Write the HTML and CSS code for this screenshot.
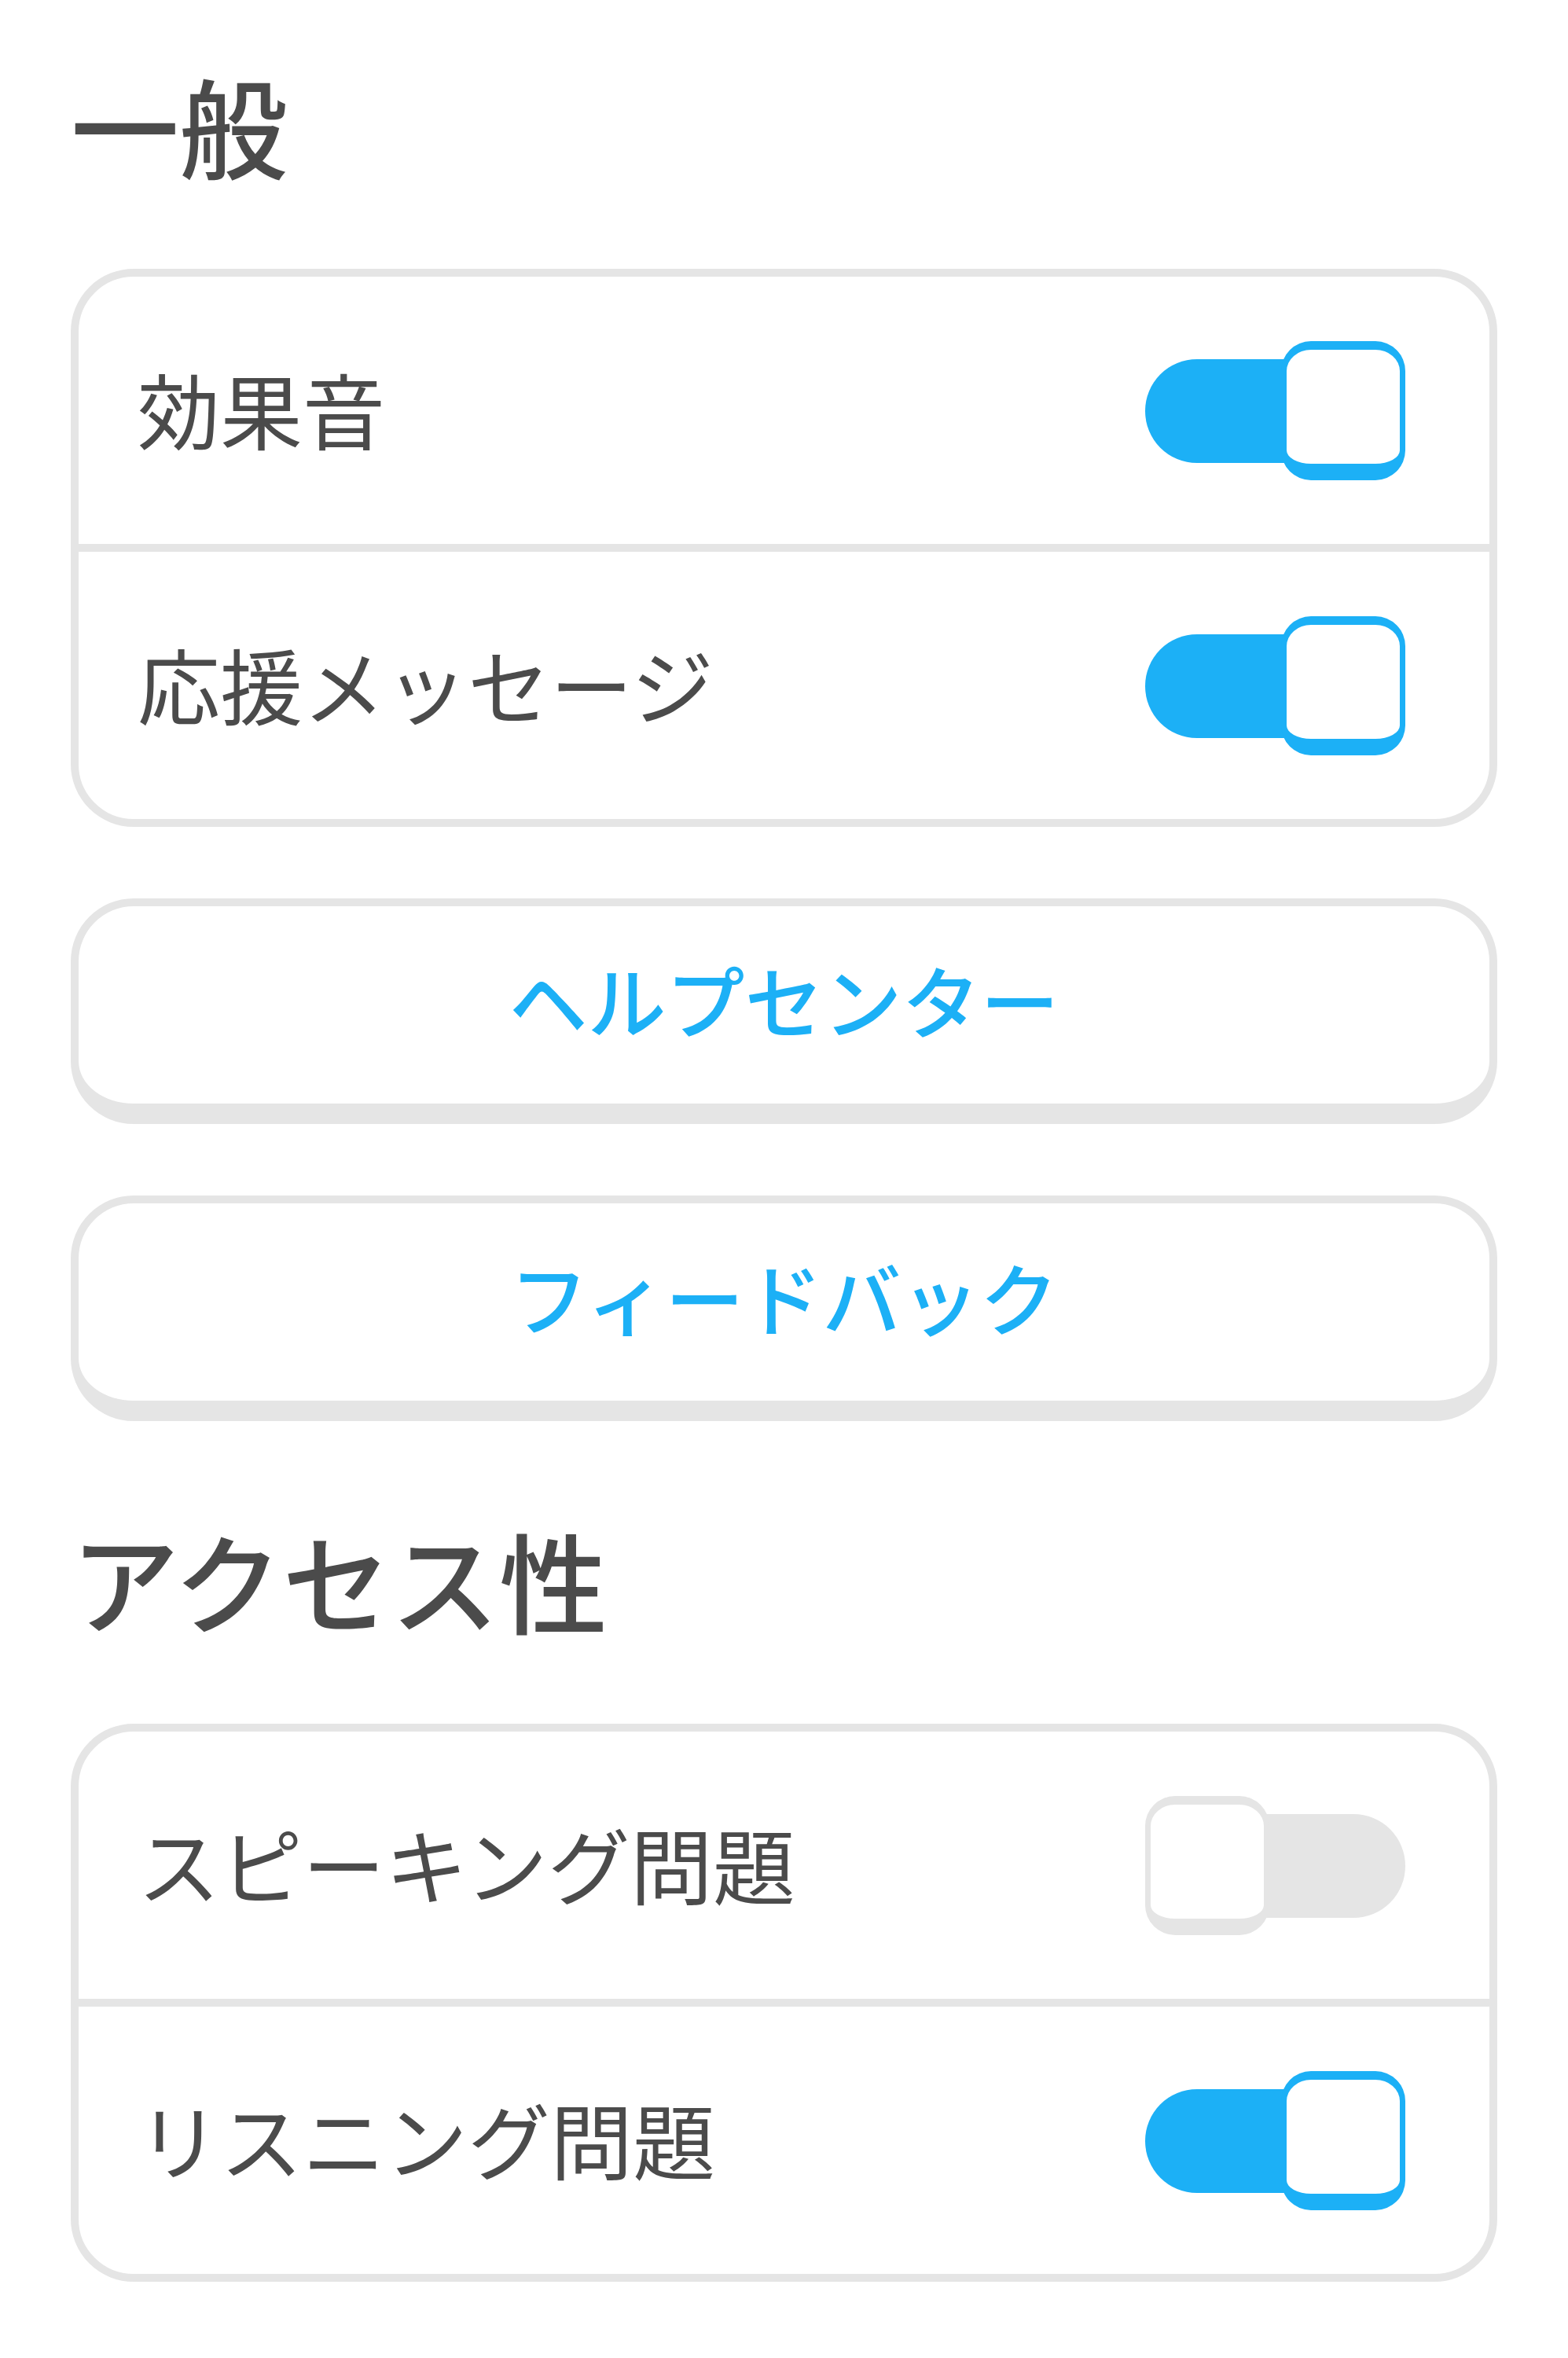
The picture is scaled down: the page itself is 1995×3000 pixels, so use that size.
FILE: index.html
```html
<!DOCTYPE html>
<html lang="ja">
<head>
<meta charset="utf-8">
<title>設定</title>
<link rel="stylesheet" href="styles.css">
</head>
<body>
<main class="settings">
  <h2 class="section-title first">一般</h2>
  <div class="card">
    <div class="row">
      <span class="label">効果音</span>
      <span class="toggle on"><span class="track"></span><span class="knob"></span></span>
    </div>
    <div class="row">
      <span class="label">応援メッセージ</span>
      <span class="toggle on"><span class="track"></span><span class="knob"></span></span>
    </div>
  </div>
  <a class="btn">ヘルプセンター</a>
  <a class="btn">フィードバック</a>
  <h2 class="section-title">アクセス性</h2>
  <div class="card">
    <div class="row">
      <span class="label">スピーキング問題</span>
      <span class="toggle off"><span class="track"></span><span class="knob"></span></span>
    </div>
    <div class="row">
      <span class="label">リスニング問題</span>
      <span class="toggle on"><span class="track"></span><span class="knob"></span></span>
    </div>
  </div>
</main>
</body>
</html>
```

FILE: styles.css
```css
html, body {
  margin: 0;
  padding: 0;
  background: #ffffff;
}

body {
  font-family: "Noto Sans CJK JP", "Noto Sans", sans-serif;
  color: #4b4b4b;
}

.settings {
  display: flex;
  flex-direction: column;
  padding: 0 90px 90px;
}

.section-title {
  margin: 131px 0 116px;
  font-size: 138px;
  font-weight: 500;
  line-height: 1;
  color: #4b4b4b;
}

.section-title.first {
  margin-top: 88px;
}

.card {
  border: 10px solid #e5e5e5;
  border-radius: 80px;
  background: #ffffff;
}

.row {
  height: 340px;
  display: flex;
  align-items: center;
  justify-content: space-between;
  padding: 0 107px 0 75px;
}

.row + .row {
  border-top: 10px solid #e5e5e5;
}

.label {
  font-size: 105px;
  line-height: 1;
  font-weight: 400;
  padding-bottom: 8px;
}

.toggle {
  position: relative;
  flex: none;
  width: 331px;
  height: 177px;
}

.track {
  position: absolute;
  left: 0;
  right: 0;
  top: 23px;
  height: 132px;
  border-radius: 66px;
  background: #1cb0f6;
}

.knob {
  position: absolute;
  top: 0;
  width: 158px;
  height: 177px;
  box-sizing: border-box;
  border-style: solid;
  border-width: 11px 7px 21px;
  border-radius: 38px;
  background: #ffffff;
}

.toggle.on .knob {
  right: 0;
  border-color: #1cb0f6;
}

.toggle.off .track {
  background: #e5e5e5;
}

.toggle.off .knob {
  left: 0;
  border-color: #e5e5e5;
}

.btn {
  display: flex;
  align-items: center;
  justify-content: center;
  height: 287px;
  box-sizing: border-box;
  margin-top: 91px;
  padding-bottom: 16px;
  border: 10px solid #e5e5e5;
  border-bottom-width: 26px;
  border-radius: 80px;
  background: #ffffff;
  font-size: 100px;
  font-weight: 500;
  line-height: 1;
  color: #1cb0f6;
  text-decoration: none;
}
```
